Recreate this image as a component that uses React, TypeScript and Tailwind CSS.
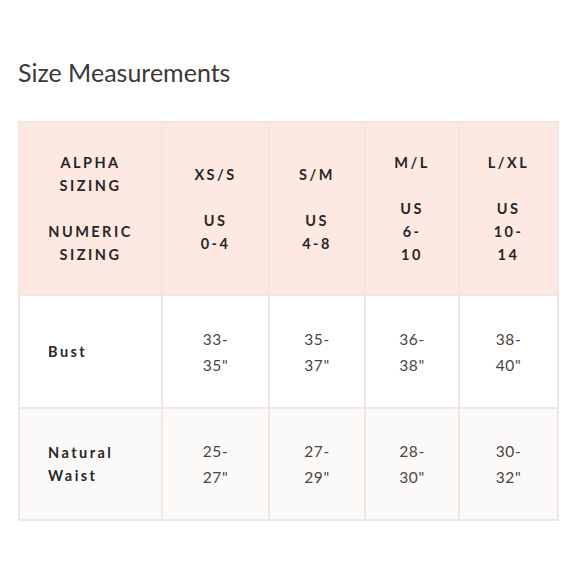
import React from "react";

const sizes = [
  { alpha: ["XS/S"], numeric: ["US", "0-4"], bust: ["33-", "35\""], waist: ["25-", "27\""] },
  { alpha: ["S/M"], numeric: ["US", "4-8"], bust: ["35-", "37\""], waist: ["27-", "29\""] },
  { alpha: ["M/L"], numeric: ["US", "6-", "10"], bust: ["36-", "38\""], waist: ["28-", "30\""] },
  { alpha: ["L/XL"], numeric: ["US", "10-", "14"], bust: ["38-", "40\""], waist: ["30-", "32\""] },
];

const label = "font-['Lato','Liberation_Sans',sans-serif] font-bold text-[14.5px] tracking-[0.17em] text-[#2a2626] leading-[23px]";
const value = "font-['Lato','Liberation_Sans',sans-serif] text-[15.5px] tracking-[0.04em] text-[#4a4545] leading-[26px]";

function Lines({ lines, className }: { lines: string[]; className: string }) {
  return (
    <div className={className}>
      {lines.map((l, i) => (
        <div key={i}>{l}</div>
      ))}
    </div>
  );
}

export default function App() {
  return (
    <div className="w-[580px] h-[580px] bg-white px-[18px] pt-[57px]">
      <h2 className="font-['Lato','Liberation_Sans',sans-serif] font-normal text-[25px] leading-[30px] text-[#3d3838]">
        Size Measurements
      </h2>

      <div className="mt-[34px] w-[541px] grid grid-cols-[141px_105px_94px_92px_97px] grid-rows-[171px_111px_110px] gap-[2px] p-[2px] bg-[#eee7e4]">
        {/* Header */}
        <div className="bg-[#fde8e2] flex flex-col items-center justify-center text-center">
          <Lines lines={["ALPHA", "SIZING"]} className={label} />
          <div className="h-[23px]" />
          <Lines lines={["NUMERIC", "SIZING"]} className={label} />
        </div>
        {sizes.map((s) => (
          <div key={s.alpha[0]} className="bg-[#fde8e2] flex flex-col items-center justify-center text-center">
            <Lines lines={s.alpha} className={label} />
            <div className="h-[23px]" />
            <Lines lines={s.numeric} className={label} />
          </div>
        ))}

        {/* Bust */}
        <div className="bg-white flex items-center pl-[28px]">
          <Lines lines={["Bust"]} className={label} />
        </div>
        {sizes.map((s) => (
          <div key={"b" + s.alpha[0]} className="bg-white flex items-center justify-center text-center">
            <Lines lines={s.bust} className={value} />
          </div>
        ))}

        {/* Waist */}
        <div className="bg-[#fcfaf9] flex items-center pl-[28px]">
          <Lines lines={["Natural", "Waist"]} className={label} />
        </div>
        {sizes.map((s) => (
          <div key={"w" + s.alpha[0]} className="bg-[#fcfaf9] flex items-center justify-center text-center">
            <Lines lines={s.waist} className={value} />
          </div>
        ))}
      </div>
    </div>
  );
}
